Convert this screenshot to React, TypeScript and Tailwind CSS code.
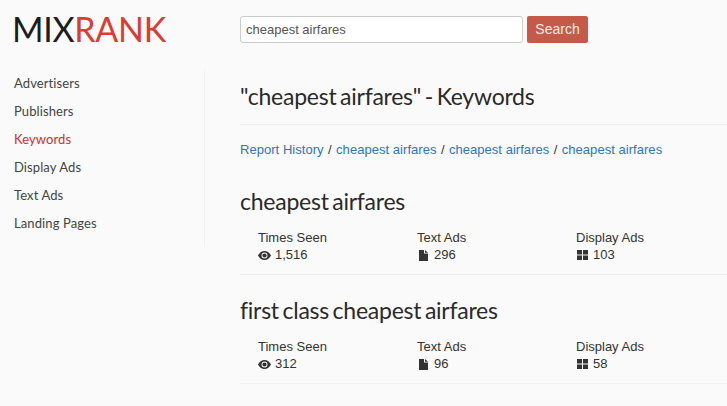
const nav = ["Advertisers", "Publishers", "Keywords", "Display Ads", "Text Ads", "Landing Pages"];

function Eye() {
  return (
    <svg width="13" height="9" viewBox="0 0 13 9" className="shrink-0">
      <path fillRule="evenodd" fill="#333" d="M6.5 0C3.6 0 1.3 1.8 0 4.5 1.3 7.2 3.6 9 6.5 9S11.700 7.200 13 4.500C11.700 1.800 9.400 0 6.500 0ZM6.500 1.500A3 3 0 1 1 6.500 7.500 3 3 0 0 1 6.500 1.500Z" />
      <circle cx="6.500" cy="4.500" r="2.100" fill="#333" />
    </svg>
  );
}

function FileIcon() {
  return (
    <svg width="9" height="11" viewBox="0 0 9 11" className="shrink-0">
      <path fill="#333" d="M0 0H5V3.500H9V11H0ZM6 0L9 2.700H6Z" />
    </svg>
  );
}

function Grid() {
  return (
    <svg width="11" height="10" viewBox="0 0 11 10" className="shrink-0">
      <path fill="#333" d="M0 0H5V4.500H0ZM6 0H11V4.500H6ZM0 5.500H5V10H0ZM6 5.500H11V10H6Z" />
    </svg>
  );
}

function Stat({ label, value, icon, width }: { label: string; value: string; icon: React.ReactNode; width: string }) {
  return (
    <div className={width}>
      <div className="h-[17px] leading-[18px]">{label}</div>
      <div className="flex h-[18px] items-center gap-[5px] leading-[18px]">
        <span className="flex w-[12px] justify-center">{icon}</span>
        <span>{value}</span>
      </div>
    </div>
  );
}

function Result({ title, a, b, c }: { title: string; a: string; b: string; c: string }) {
  return (
    <section className="border-b border-[#eeeeee] pb-[10px]">
      <h2 className="font-['Lato',sans-serif] text-[23px] leading-[30px] tracking-[-0.25px] text-[#2a2a2a] [word-spacing:-2px]">{title}</h2>
      <div className="mt-[13px] flex pl-[18px]">
        <Stat width="w-[159px]" label="Times Seen" value={a} icon={<Eye />} />
        <Stat width="w-[159px]" label="Text Ads" value={b} icon={<FileIcon />} />
        <Stat width="w-[120px]" label="Display Ads" value={c} icon={<Grid />} />
      </div>
    </section>
  );
}

function Crumb({ children }: { children: React.ReactNode }) {
  return <a className="tracking-[0.04px] text-[#2f74c0]">{children}</a>;
}

function Slash() {
  return <span className="mx-[0.8px]"> / </span>;
}

export default function App() {
  return (
    <div className="h-[406px] w-[727px] overflow-hidden bg-[#fafafa] font-['Liberation_Sans',sans-serif] text-[13px] text-[#333333]">
      <header className="flex h-[69px] items-start">
        <div className="w-[240px] pl-[12px] pt-[8px] font-['Lato',sans-serif] text-[34px] leading-[42px] tracking-[-0.3px]">
          <span className="text-[#1d1d1d]">MIX</span>
          <span className="text-[#dc3c32]">RANK</span>
        </div>
        <div className="flex gap-[4px] pt-[16px]">
          <input
            readOnly
            value="cheapest airfares"
            className="h-[27px] w-[283px] rounded-[3px] border border-[#cccccc] bg-white px-[5px] text-[13px] text-[#555555] outline-none"
          />
          <button className="h-[27px] w-[61px] rounded-[2px] bg-[#c55a48] text-center text-[14px] text-[#fbeeea]">Search</button>
        </div>
      </header>
      <div className="flex">
        <nav className="h-[178px] w-[205px] border-r border-[#f1f1f1] pl-[14px] font-['Lato',sans-serif] text-[13px] tracking-[0.1px] text-[#444444]">
          {nav.map((n) => (
            <div key={n} className={`h-[28px] leading-[28px] ${n === "Keywords" ? "text-[#c9302c]" : ""}`}>
              {n}
            </div>
          ))}
        </nav>
        <main className="w-[522px] pl-[35px]">
          <div className="border-b border-[#eeeeee] pb-[12px] pt-[11px]">
            <h1 className="font-['Lato',sans-serif] text-[23px] leading-[32px] tracking-[-0.25px] text-[#2a2a2a] [word-spacing:-2px]">"cheapest airfares" - Keywords</h1>
          </div>
          <div className="mt-[16px] h-[18px] whitespace-nowrap leading-[18px] text-[#333333]">
            <Crumb>Report History</Crumb>
            <Slash />
            <Crumb>cheapest airfares</Crumb>
            <Slash />
            <Crumb>cheapest airfares</Crumb>
            <Slash />
            <Crumb>cheapest airfares</Crumb>
          </div>
          <div className="mt-[27px]">
            <Result title="cheapest airfares" a="1,516" b="296" c="103" />
          </div>
          <div className="mt-[20px]">
            <Result title="first class cheapest airfares" a="312" b="96" c="58" />
          </div>
        </main>
      </div>
    </div>
  );
}
